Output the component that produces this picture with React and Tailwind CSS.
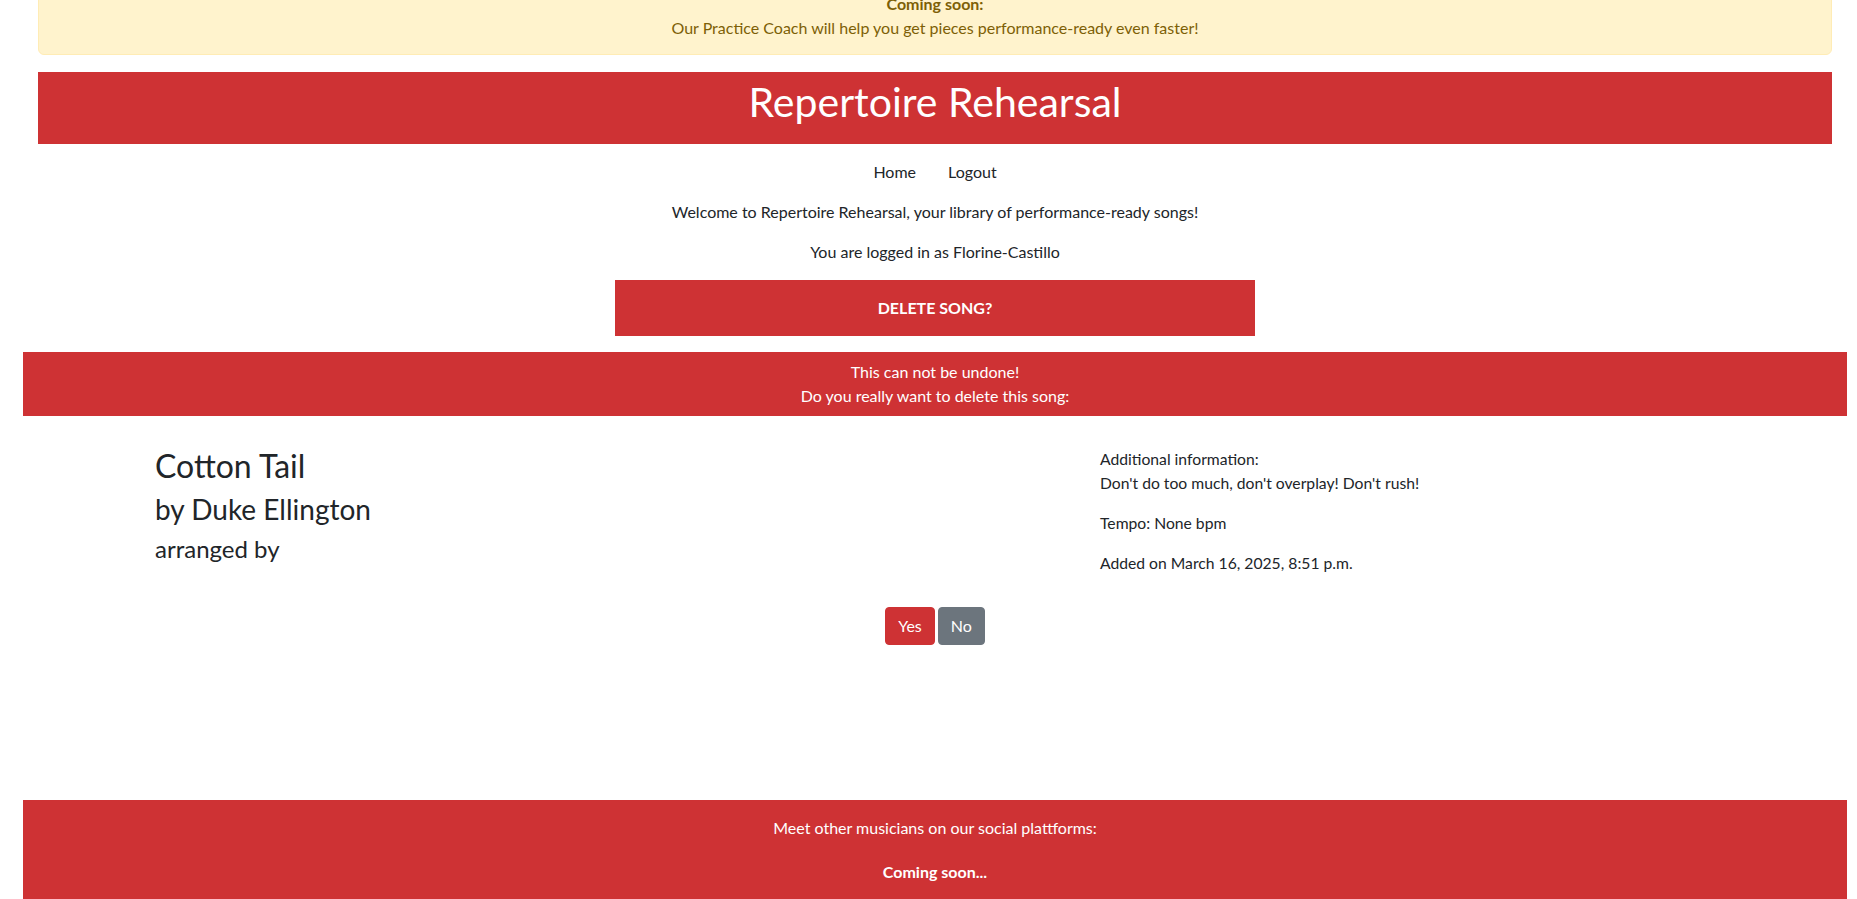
export default function App() {
  return (
    <div className="h-[899px] w-full overflow-hidden bg-white font-['Lato','Noto_Sans',sans-serif] text-base leading-6 text-[#212529]">
      <div className="w-[1870px]">
        {/* Hinweis oben (Seite ist gescrollt) */}
        <div className="mx-[38px] mt-[-25px] rounded-md border border-[#ffecb5] bg-[#fff3cd] pt-4 pb-[14px] text-center text-[#7d5f06]">
          <p className="font-bold">Coming soon:</p>
          <p>Our Practice Coach will help you get pieces performance-ready even faster!</p>
        </div>

        {/* Kopfzeile */}
        <header className="mx-[38px] mt-[17px] h-[72px] bg-[#ce3234] pt-[6px] text-center">
          <h1 className="text-[41px] leading-[48px] font-normal text-white">Repertoire Rehearsal</h1>
        </header>

        <nav className="mt-2 flex justify-center py-2">
          <a className="px-4 text-[#212529]">Home</a>
          <a className="px-4 text-[#212529]">Logout</a>
        </nav>

        <p className="mt-2 text-center">Welcome to Repertoire Rehearsal, your library of performance-ready songs!</p>
        <p className="mt-4 text-center">You are logged in as Florine-Castillo</p>

        <div className="mx-auto mt-4 w-[640px] bg-[#ce3234] py-4 text-center font-bold text-white uppercase">
          Delete song?
        </div>

        <div className="mx-[23px] mt-4 bg-[#ce3234] py-2 text-center text-white">
          <p>This can not be undone!</p>
          <p>Do you really want to delete this song:</p>
        </div>

        {/* Songdetails */}
        <div className="mt-[31px] grid grid-cols-[1100px_1fr]">
          <div className="pl-[155px]">
            <h2 className="mb-2 text-[32px] leading-[38.4px] font-normal">Cotton Tail</h2>
            <h3 className="mb-2 text-[28px] leading-[33.6px] font-normal">by Duke Ellington</h3>
            <h4 className="text-[24px] leading-[28.8px] font-normal">arranged by</h4>
          </div>
          <div className="text-[15.7px]">
            <p>
              Additional information:
              <br />
              Don't do too much, don't overplay! Don't rush!
            </p>
            <p className="mt-4">Tempo: None bpm</p>
            <p className="mt-4">Added on March 16, 2025, 8:51 p.m.</p>
          </div>
        </div>

        <div className="mt-8 flex justify-center gap-[3px]">
          <button className="h-[38px] rounded border border-[#ce3234] bg-[#ce3234] px-3 text-white">Yes</button>
          <button className="h-[38px] rounded border border-[#6c757d] bg-[#6c757d] px-3 text-white">No</button>
        </div>

        <footer className="mx-[23px] mt-[155px] h-[140px] bg-[#ce3234] pt-4 text-center text-white">
          <p>Meet other musicians on our social plattforms:</p>
          <p className="mt-5 font-bold">Coming soon...</p>
        </footer>
      </div>
    </div>
  );
}
